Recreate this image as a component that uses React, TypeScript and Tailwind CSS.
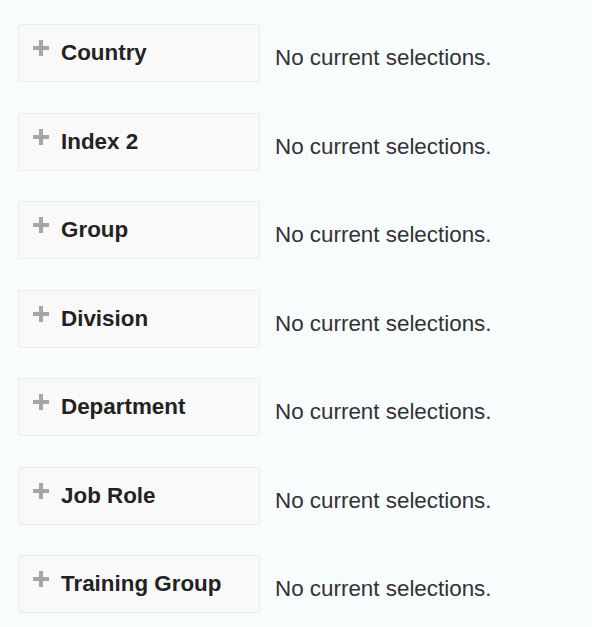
import React from "react";

const items = ["Country", "Index 2", "Group", "Division", "Department", "Job Role", "Training Group"];

function Plus() {
  return (
    <svg width="16" height="16" viewBox="0 0 16 16" className="shrink-0">
      <rect x="6" y="0" width="4" height="16" fill="#a6a6a6" />
      <rect x="0" y="6" width="16" height="4" fill="#a6a6a6" />
    </svg>
  );
}

export default function App() {
  return (
    <div
      className="min-h-[627px] w-[592px] bg-[#f7fcfd] pl-[18px] pt-[24px]"
      style={{ fontFamily: '"Liberation Sans", Arial, sans-serif' }}
    >
      <div className="flex flex-col gap-[30.5px]">
        {items.map((t) => (
          <div key={t} className="flex items-start">
            <div className="flex h-[58px] w-[242px] shrink-0 items-start gap-[12px] rounded-[2px] border border-[#ececec] bg-[#faf9f9] pl-[14px] pt-[15px]">
              <Plus />
              <span className="mt-[1px] text-[22.4px] font-bold leading-[24px] text-[#222]">{t}</span>
            </div>
            <div className="ml-[15px] mt-[22px] whitespace-nowrap text-[22.4px] leading-[24px] text-[#333]">
              No current selections.
            </div>
          </div>
        ))}
      </div>
    </div>
  );
}
